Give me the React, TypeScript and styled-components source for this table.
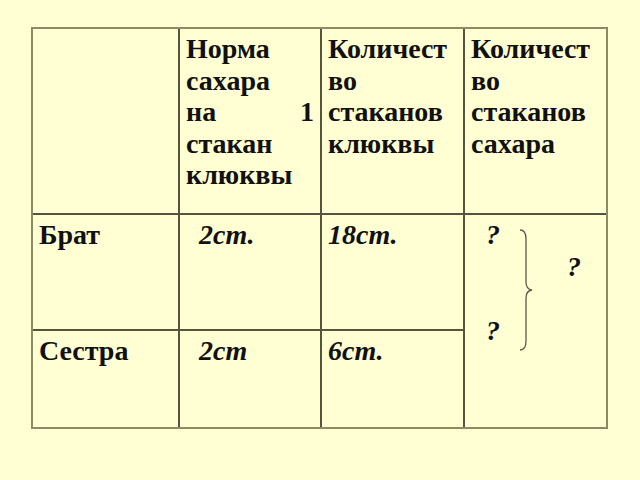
import React from 'react'
import styled, { createGlobalStyle } from 'styled-components'

const GlobalStyle = createGlobalStyle`
  html, body {
    margin: 0;
    padding: 0;
    background: #ffffd3;
  }
  body {
    width: 640px;
    height: 480px;
    overflow: hidden;
    font-family: "Liberation Serif", "Times New Roman", serif;
    color: #111;
  }
`

const Page = styled.div`
  padding: 27px 0 0 31px;
`

const Grid = styled.div`
  display: grid;
  grid-template-columns: 145px 140px 141px 141px;
  grid-template-rows: 184px 114px 96px;
  gap: 2px;
  width: max-content;
  background: #55553f;
  border: 2px solid #8c8c64;
`

const Cell = styled.div<{ $rows?: number }>`
  background: #ffffd3;
  padding: 4px 6px 0 6px;
  font-size: 28px;
  line-height: 31.5px;
  font-weight: bold;
  grid-row: ${p => (p.$rows ? `span ${p.$rows}` : 'auto')};
`

const Line = styled.div<{ $spread?: boolean }>`
  display: ${p => (p.$spread ? 'flex' : 'block')};
  justify-content: space-between;
  white-space: nowrap;
`

const Amount = styled.div<{ $indent?: boolean }>`
  font-style: italic;
  padding-left: ${p => (p.$indent ? '13px' : '0')};
`

const Answer = styled.div`
  display: flex;
  align-items: flex-start;
  padding-left: 15px;
  font-style: italic;
`

const Marks = styled.div`
  display: flex;
  flex-direction: column;
  justify-content: space-between;
  width: 33px;
  height: 127px;
`

const Brace = styled.svg`
  margin-top: 10px;
  flex: none;
`

const Total = styled.div`
  margin: 32px 0 0 34px;
`

function Header({ lines }: { lines: string[] }) {
  return (
    <Cell>
      {lines.map(l => (
        <Line key={l}>{l}</Line>
      ))}
    </Cell>
  )
}

export default function App() {
  return (
    <Page>
      <GlobalStyle />
      <Grid>
        <Cell />
        <Cell>
          <Line>Норма</Line>
          <Line>сахара</Line>
          <Line $spread>
            <span>на</span>
            <span>1</span>
          </Line>
          <Line>стакан</Line>
          <Line>клюквы</Line>
        </Cell>
        <Header lines={['Количест', 'во', 'стаканов', 'клюквы']} />
        <Header lines={['Количест', 'во', 'стаканов', 'сахара']} />

        <Cell>Брат</Cell>
        <Cell>
          <Amount $indent>2ст.</Amount>
        </Cell>
        <Cell>
          <Amount>18ст.</Amount>
        </Cell>
        <Cell $rows={2}>
          <Answer>
            <Marks>
              <div>?</div>
              <div>?</div>
            </Marks>
            <Brace width="14" height="122" viewBox="0 0 14 122">
              <path
                d="M1,1 C5,1 7,4 7,10 L7,53 C7,58 9,60.5 13,61 C9,61.5 7,64 7,69 L7,112 C7,118 5,121 1,121"
                fill="none"
                stroke="#5a5a4a"
                strokeWidth="1.3"
              />
            </Brace>
            <Total>?</Total>
          </Answer>
        </Cell>

        <Cell>Сестра</Cell>
        <Cell>
          <Amount $indent>2ст</Amount>
        </Cell>
        <Cell>
          <Amount>6ст.</Amount>
        </Cell>
      </Grid>
    </Page>
  )
}
